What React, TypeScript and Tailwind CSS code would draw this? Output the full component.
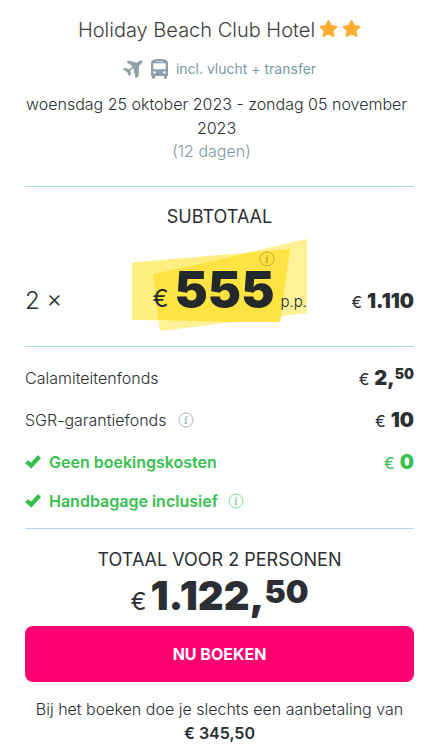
import React from 'react';
import { FaStar } from 'react-icons/fa';

interface IconProps {
  className?: string;
}

interface PriceProps {
  euros: string;
  cents?: string;
}

interface CostRowProps extends PriceProps {
  label: string;
  info?: boolean;
}

const PlaneIcon: React.FC<IconProps> = ({ className }) => (
  <svg viewBox="0 0 60 56" className={className} fill="currentColor" aria-hidden="true">
    <path d="M59 3C57-1 48 2 42 8L20 2C16 1 12 4 12 7L29 18 19 27 5 23 0 28 12 35 18 48 24 43 22 31 31 23 37 53C41 54 46 50 47 46L48 16C54 11 59 7 59 3Z" />
  </svg>
);

const BusIcon: React.FC<IconProps> = ({ className }) => (
  <svg viewBox="0 0 17 20" className={className} fill="currentColor" aria-hidden="true">
    <path
      fillRule="evenodd"
      d="M3.500.5C6.500-.1 10.500-.1 13.500.5 15.800.9 17 2 17 4v13h-1v1.500c0 .8-.5 1.300-1.200 1.300h-.8c-.7 0-1.200-.5-1.200-1.300V17H4.200v1.500c0 .8-.5 1.300-1.200 1.300h-.8c-.7 0-1.200-.5-1.200-1.300V17H0V4C0 2 1.200.9 3.500.5ZM4.500 1.900v.7h8v-.7ZM3.300 4.300c-.7 0-1 .4-1 1v3.900c0 .6.3 1 1 1h10.400c.7 0 1-.4 1-1V5.300c0-.6-.3-1-1-1ZM3.600 12.200a1.200 1.200 0 1 0 0 2.400 1.200 1.200 0 0 0 0-2.400ZM13.400 12.200a1.200 1.200 0 1 0 0 2.400 1.200 1.200 0 0 0 0-2.400Z"
    />
  </svg>
);

const CheckIcon: React.FC<IconProps> = ({ className }) => (
  <svg viewBox="0 0 16 16" className={className} fill="currentColor" aria-hidden="true">
    <path
      d="M1 9 3.200 7.100 6 9.600 13 2 15.200 4.100 6.200 13.800Z"
      stroke="currentColor"
      strokeWidth="1.300"
      strokeLinejoin="round"
    />
  </svg>
);

const InfoIcon: React.FC<IconProps> = ({ className }) => (
  <svg viewBox="0 0 16 16" className={className} fill="none" aria-hidden="true">
    <circle cx="8" cy="8" r="7" stroke="currentColor" />
    <circle cx="8.600" cy="4.800" r="1" fill="currentColor" />
    <path d="M6.500 7h1.800l-1 4.300h1.600" stroke="currentColor" strokeWidth="1.400" />
  </svg>
);

const Price: React.FC<PriceProps> = ({ euros, cents }) => (
  <span className="flex items-baseline gap-[5px] leading-6">
    <span className="text-base font-normal">€</span>
    <span className="flex items-start text-xl leading-6 font-black">
      {euros}
      {cents && (
        <>
          ,<span className="text-sm leading-4">{cents}</span>
        </>
      )}
    </span>
  </span>
);

const CostRow: React.FC<CostRowProps> = ({ label, info, euros, cents }) => (
  <li className="flex h-[26px] items-center justify-between">
    <span className="flex items-center gap-3">
      {label}
      {info && (
        <button type="button" aria-label={`Info ${label}`} className="text-[#a9bcc2]">
          <InfoIcon className="size-4" />
        </button>
      )}
    </span>
    <Price euros={euros} cents={cents} />
  </li>
);

export default function App() {
  return (
    <main className="bg-white pt-4 pr-[27px] pb-2 pl-[25px] font-['Inter',sans-serif] text-base leading-6 text-[#2b2f33]">
      <header className="text-center">
        <h1 className="flex items-center justify-center gap-1 text-xl leading-7 font-light text-[#403e40]">
          Holiday Beach Club Hotel
          <span className="flex gap-1 pb-1 text-[#ffac2f]">
            <FaStar className="size-[19px]" />
            <FaStar className="size-[19px]" />
          </span>
        </h1>
        <div className="mt-[13px] flex h-6 items-center justify-center gap-2 text-sm text-[#7c98a3]">
          <PlaneIcon className="h-[19px] w-5 text-[#8fa1a6]" />
          <BusIcon className="h-5 w-[17px] text-[#8fa1a6]" />
          <span>incl. vlucht + transfer</span>
        </div>
        <p className="mt-[11px] pr-1.5 font-light">
          woensdag 25 oktober 2023 - zondag 05 november 2023
        </p>
        <p className="pr-4 leading-[22px] font-light text-[#7c98a3]">(12 dagen)</p>
      </header>

      <section className="mt-6 border-t border-[#add8e6] pt-4">
        <h2 className="text-center text-lg leading-7">SUBTOTAAL</h2>
        <div className="mt-2 flex h-[92px] items-center justify-between">
          <span className="w-[107px] pt-8 text-2xl font-light">2 ×</span>
          <div className="relative h-full w-[175px] text-[#23282b]">
            <svg
              viewBox="0 0 175 92"
              preserveAspectRatio="none"
              className="absolute inset-0 size-full"
              aria-hidden="true"
            >
              <path d="M0 23.500 158 10 148 83 0 81Z" fill="#ffef81" />
              <path d="M21 35 175 0V74L28 92Z" fill="#fff195" />
              <path d="M21 35 121 13 158 10 149 77 148 83 98 83 26 81Z" fill="#ffe342" />
            </svg>
            <button
              type="button"
              aria-label="Info prijs"
              className="absolute top-3 right-8 text-[#c0ab34]"
            >
              <InfoIcon className="size-4" />
            </button>
            <p className="relative flex items-baseline justify-end pt-[22px]">
              <span className="mr-1.5 text-2xl">€</span>
              <span className="mr-1.5 text-[50px] leading-14 font-black">555</span>
              <span className="text-[15px] font-light">p.p.</span>
            </p>
          </div>
          <span className="flex w-[107px] justify-end pt-8">
            <Price euros="1.110" />
          </span>
        </div>
      </section>

      <section className="mt-[15px] border-t border-[#add8e6] pt-[18px] pb-[17px]">
        <ul className="flex flex-col gap-4 font-light">
          <CostRow label="Calamiteitenfonds" euros="2" cents="50" />
          <CostRow label="SGR-garantiefonds" info euros="10" />
          <li className="flex h-[26px] items-center justify-between text-[#38bf50]">
            <span className="flex items-center gap-2 font-semibold">
              <CheckIcon className="size-4" />
              Geen boekingskosten
            </span>
            <Price euros="0" />
          </li>
          <li className="flex h-5 items-center gap-2 font-semibold text-[#38bf50]">
            <CheckIcon className="size-4" />
            Handbagage inclusief
            <button type="button" aria-label="Info handbagage" className="ml-0.5 text-[#86d794]">
              <InfoIcon className="size-4" />
            </button>
          </li>
        </ul>
      </section>

      <section className="border-t border-[#add8e6] pt-[17px] text-center">
        <h2 className="text-lg leading-7">TOTAAL VOOR 2 PERSONEN</h2>
        <p className="flex items-baseline justify-center gap-1">
          <span className="text-2xl">€</span>
          <span className="flex items-start text-[40px] leading-[43px] font-black">
            1.122,<span className="text-[32px] leading-9">50</span>
          </span>
        </p>
        <button
          type="button"
          className="mt-2 h-14 w-full rounded-lg bg-[#ff0073] font-bold text-white"
        >
          NU BOEKEN
        </button>
        <p className="mt-[15px] font-light">
          Bij het boeken doe je slechts een aanbetaling van{' '}
          <span className="block font-semibold">€ 345,50</span>
        </p>
      </section>
    </main>
  );
}
